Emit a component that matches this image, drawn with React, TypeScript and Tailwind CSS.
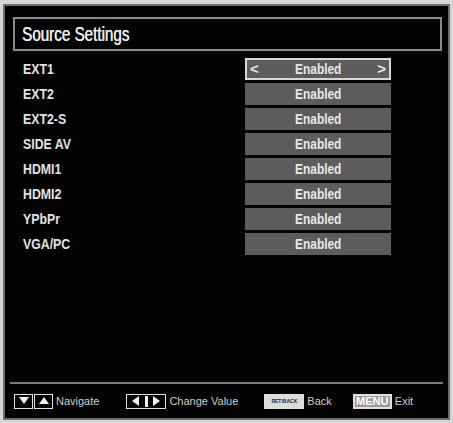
import React from "react";

const rows = ["EXT1", "EXT2", "EXT2-S", "SIDE AV", "HDMI1", "HDMI2", "YPbPr", "VGA/PC"];

const font = "font-['Liberation_Sans',Arial,sans-serif]";

function Tri({ dir }: { dir: "up" | "down" | "left" | "right" }) {
  const pts: Record<string, string> = {
    up: "1,9 11,9 6,2",
    down: "1,2 11,2 6,9",
    left: "9,1 9,11 2,6",
    right: "2,1 2,11 9,6",
  };
  return (
    <svg width="12" height="12" viewBox="0 0 12 12">
      <polygon points={pts[dir]} fill="#f2f2f2" />
    </svg>
  );
}

export default function App() {
  return (
    <div className={`w-[453px] h-[423px] bg-[#d6d6d6] pt-[4px] pl-[3px] pr-[3px] pb-[3px] ${font}`}>
      <div className="w-full h-full border-2 border-[#6e6e6e] bg-[#030303] flex flex-col">
        <div className="mt-[11px] ml-[8px] mr-[6px] h-[34px] border-2 border-[#8a8a8a] flex items-center pl-[7px]">
          <span className="inline-block origin-left scale-x-[0.76] text-[20px] leading-none text-[#ededed] [text-shadow:0.4px_0_0_#ededed]">Source Settings</span>
        </div>
        <div className="mt-[7px] flex flex-col gap-[3px]">
          {rows.map((r, i) => (
            <div key={r} className="flex items-center h-[22px]">
              <div className="pl-[18px] w-[240px]">
                <span className="inline-block origin-left scale-x-[0.88] text-[14px] font-bold text-[#e2e2e2]">{r}</span>
              </div>
              <div
                className={`w-[146px] h-[22px] flex items-center justify-between px-[3px] text-[14px] font-bold text-[#e8e8e8] bg-[#5c5c5c] ${
                  i === 0 ? "border-2 border-[#d8d8d8]" : ""
                }`}
              >
                <span className="w-[10px] text-[15px] font-bold">{i === 0 ? "<" : ""}</span>
                <span className="inline-block scale-x-[0.85]">Enabled</span>
                <span className="w-[10px] text-[15px] font-bold text-right">{i === 0 ? ">" : ""}</span>
              </div>
            </div>
          ))}
        </div>
        <div className="flex-1" />
        <div className="mx-[5px] h-[2px] bg-[#7a7a7a]" />
        <div className="h-[34px] flex items-center pl-[9px] text-[11px] text-[#cfcfcf]">
          <div className="flex items-center">
            <div className="flex gap-[1px]">
              <div className="w-[19px] h-[15px] border border-[#e0e0e0] flex items-center justify-center"><Tri dir="down" /></div>
              <div className="w-[19px] h-[15px] border border-[#e0e0e0] flex items-center justify-center"><Tri dir="up" /></div>
            </div>
            <span className="ml-[3px]">Navigate</span>
          </div>
          <div className="flex items-center ml-[27px]">
            <div className="w-[40px] h-[15px] border border-[#e0e0e0] flex items-center justify-center gap-[3px]">
              <Tri dir="left" />
              <div className="w-[3px] h-[11px] bg-[#f0f0f0]" />
              <Tri dir="right" />
            </div>
            <span className="ml-[3px]">Change Value</span>
          </div>
          <div className="flex items-center ml-[26px]">
            <div className="w-[40px] h-[15px] border border-[#e0e0e0] bg-[#dcdcdc] flex items-center justify-center">
              <span className="text-[5px] font-bold text-[#222] leading-none">RET/BACK</span>
            </div>
            <span className="ml-[3px]">Back</span>
          </div>
          <div className="flex items-center ml-[21px]">
            <div className="w-[39px] h-[15px] border-2 border-[#e0e0e0] bg-[#9a9a9a] flex items-center justify-center">
              <span className="text-[11px] font-bold text-white leading-none">MENU</span>
            </div>
            <span className="ml-[3px]">Exit</span>
          </div>
        </div>
      </div>
    </div>
  );
}
